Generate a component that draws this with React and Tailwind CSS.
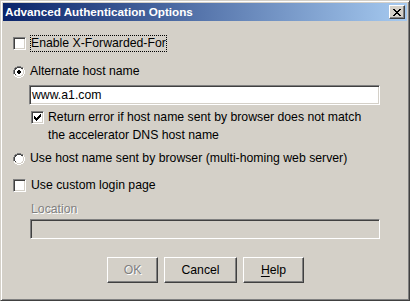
import React from "react";

const font = { fontFamily: '"Liberation Sans", Arial, sans-serif' };

function Check({ checked }) {
  return (
    <div className="relative w-[13px] h-[13px] shrink-0 bg-white border border-t-[#808080] border-l-[#808080] border-b-white border-r-white shadow-[inset_1px_1px_0_#404040,inset_-1px_-1px_0_#d4d0c8]">
      {checked && (
        <svg className="absolute left-[2px] top-[2px]" width="7" height="7" viewBox="0 0 7 7" shapeRendering="crispEdges">
          <path d="M0 2h1v3h-1z M1 3h1v3h-1z M2 4h1v3h-1z M3 3h1v3h-1z M4 2h1v3h-1z M5 1h1v3h-1z M6 0h1v3h-1z" fill="#000" />
        </svg>
      )}
    </div>
  );
}

function Radio({ checked }) {
  return (
    <svg width="12" height="12" viewBox="0 0 12 12" className="shrink-0" shapeRendering="crispEdges">
      <path d="M4 0h4v1h-4z M2 1h2v1h-2z M8 1h2v1h-2z M1 2h1v2h-1z M0 4h1v4h-1z" fill="#808080" />
      <path d="M10 2h1v2h-1z M11 4h1v4h-1z M10 8h1v2h-1z M8 10h2v1h-2z M4 11h4v1h-4z M2 10h2v1h-2z M1 8h1v2h-1z" fill="#ffffff" />
      <path d="M4 1h4v1h-4z M2 2h2v1h-2z M8 2h2v1h-2z M2 3h1v1h-1z M1 4h1v4h-1z M2 8h1v1h-1z" fill="#404040" />
      <path d="M9 3h1v1h-1z M10 4h1v4h-1z M9 8h1v1h-1z M8 9h2v1h-2z M4 10h4v1h-4z M2 9h2v1h-2z" fill="#d4d0c8" />
      <path d="M4 2h4v1h-4z M3 3h6v1h-6z M2 4h8v4h-8z M3 8h6v1h-6z M4 9h4v1h-4z" fill="#ffffff" />
      {checked && <path d="M5 4h2v1h-2z M4 5h4v2h-4z M5 7h2v1h-2z" fill="#000" />}
    </svg>
  );
}

function Button({ children }) {
  return (
    <div className="h-[26px] bg-[#d4d0c8] border border-t-white border-l-white border-b-[#404040] border-r-[#404040] shadow-[inset_-1px_-1px_0_#808080] flex items-center justify-center text-[12.25px]">
      {children}
    </div>
  );
}

export default function App() {
  return (
    <div
      className="w-[410px] h-[301px] bg-[#d4d0c8] border border-t-[#d4d0c8] border-l-[#d4d0c8] border-b-[#404040] border-r-[#404040] shadow-[inset_1px_1px_0_#ffffff,inset_-1px_-1px_0_#808080] p-[2px] flex flex-col text-black"
      style={font}
    >
      <div className="h-[18px] bg-[linear-gradient(to_right,#0a246a,#a6caf0)] flex items-center justify-between pl-[2px] pr-[2px]">
        <span className="text-white font-bold text-[11.7px] leading-none">Advanced Authentication Options</span>
        <div className="w-[16px] h-[14px] bg-[#d4d0c8] border border-t-white border-l-white border-b-[#404040] border-r-[#404040] shadow-[inset_-1px_-1px_0_#808080] flex items-center justify-center">
          <svg width="8" height="7" viewBox="0 0 8 7" shapeRendering="crispEdges">
            <path d="M0 0h2v1h-2z M6 0h2v1h-2z M1 1h2v1h-2z M5 1h2v1h-2z M2 2h4v1h-4z M3 3h2v1h-2z M2 4h4v1h-4z M1 5h2v1h-2z M5 5h2v1h-2z M0 6h2v1h-2z M6 6h2v1h-2z" fill="#000" />
          </svg>
        </div>
      </div>

      <div className="flex flex-col pl-[10px] pr-[27px] text-[12.25px]">
        <div className="mt-[14px] h-[17px] flex items-center">
          <Check />
          <span className="ml-[4px] h-[17px] px-[1px] flex items-center outline outline-1 outline-dotted outline-black -outline-offset-1 leading-none">
            Enable X-Forwarded-For
          </span>
        </div>

        <div className="mt-[11px] h-[17px] flex items-center">
          <Radio checked />
          <span className="ml-[5px] leading-none">Alternate host name</span>
        </div>

        <div className="mt-[5px] ml-[16px] h-[20px] bg-white border border-t-[#808080] border-l-[#808080] border-b-white border-r-white shadow-[inset_1px_1px_0_#404040,inset_-1px_-1px_0_#d4d0c8] flex items-center pl-[2px] leading-none">
          www.a1.com
        </div>

        <div className="mt-[3px] ml-[18px] flex items-start">
          <div className="mt-[3px]">
            <Check checked />
          </div>
          <div className="ml-[4px] leading-[18px]">
            Return error if host name sent by browser does not match
            <br />
            the accelerator DNS host name
          </div>
        </div>

        <div className="mt-[6px] h-[17px] flex items-center">
          <Radio />
          <span className="ml-[5px] leading-none">Use host name sent by browser (multi-homing web server)</span>
        </div>

        <div className="mt-[10px] h-[17px] flex items-center">
          <Check />
          <span className="ml-[5px] leading-none">Use custom login page</span>
        </div>

        <div className="mt-[8px] ml-[18px] h-[14px] flex items-center text-[#808080] [text-shadow:1px_1px_0_#ffffff] leading-none">
          Location
        </div>

        <div className="mt-[3px] ml-[17px] h-[20px] bg-[#d4d0c8] border border-t-[#808080] border-l-[#808080] border-b-white border-r-white shadow-[inset_1px_1px_0_#404040,inset_-1px_-1px_0_#d4d0c8]" />

        <div className="mt-[18px] ml-[94px] flex gap-[6px]">
          <div className="w-[51px]">
            <Button>
              <span className="text-[#808080] [text-shadow:1px_1px_0_#ffffff]">OK</span>
            </Button>
          </div>
          <div className="w-[73px]">
            <Button>Cancel</Button>
          </div>
          <div className="w-[61px]">
            <Button>
              <span>
                <span className="underline underline-offset-2">H</span>elp
              </span>
            </Button>
          </div>
        </div>
      </div>
    </div>
  );
}
